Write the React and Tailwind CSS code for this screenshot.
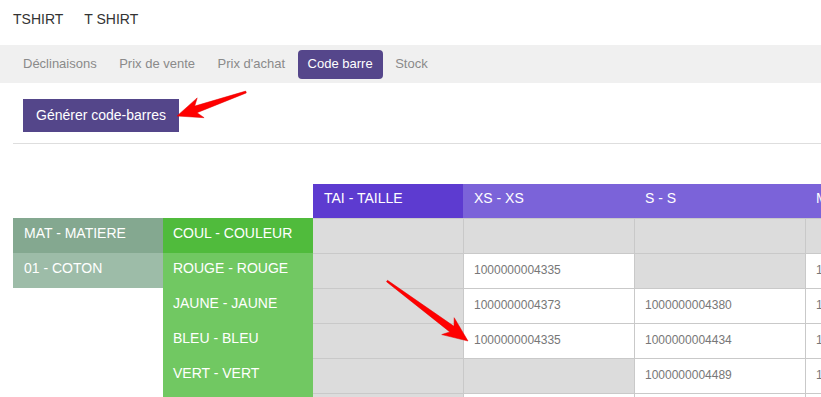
import React from 'react';

// ─── Data ─────────────────────────────────────────────────────────────────────
const TABS = ['Déclinaisons', 'Prix de vente', "Prix d'achat", 'Code barre', 'Stock'];
const SIZES = ['XS - XS', 'S - S', 'M - M'];

// null = no barcode (gray cell)
const ROWS = [
  { mat: '01 - COTON', coul: 'ROUGE - ROUGE', codes: ['1000000004335', null, '1000000004342'] },
  { mat: null, coul: 'JAUNE - JAUNE', codes: ['1000000004373', '1000000004380', '1000000004397'] },
  { mat: null, coul: 'BLEU - BLEU', codes: ['1000000004335', '1000000004434', '1000000004441'] },
  { mat: null, coul: 'VERT - VERT', codes: [null, '1000000004489', '1000000004496'] },
  { mat: null, coul: '', codes: ['', '', ''] },
];

// ─── Red annotation arrow (tapered shaft, swept barbs) ────────────────────────
function Arrow({ x1, y1, x2, y2 }) {
  const dx = x2 - x1;
  const dy = y2 - y1;
  const L = Math.hypot(dx, dy);
  const ux = dx / L, uy = dy / L;
  const vx = -uy, vy = ux;
  const pt = (u, v) => `${(x1 + ux * u + vx * v).toFixed(1)},${(y1 + uy * u + vy * v).toFixed(1)}`;
  const pts = [
    pt(0, -0.9),
    pt(L - 20, -3.5),
    pt(L - 25, -10.5),
    pt(L, 0),
    pt(L - 25, 10.5),
    pt(L - 20, 3.5),
    pt(0, 0.9),
  ].join(' ');
  return <polygon points={pts} fill="#ff0000" stroke="#e00000" strokeWidth="0.5" strokeLinejoin="round" />;
}

function Cell({ value, className = '' }) {
  const empty = value === null;
  return (
    <div
      className={`border-t border-[#c9c9c9] pl-[10px] pt-[6px] text-[12px] leading-5 text-[#777] ${
        empty ? 'bg-[#dcdcdc]' : 'bg-white'
      } ${className}`}
    >
      {value}
    </div>
  );
}

// ─── App ──────────────────────────────────────────────────────────────────────
export default function App() {
  return (
    <div
      className="relative h-screen w-full overflow-hidden bg-white text-[#333]"
      style={{ fontFamily: '"Liberation Sans", Arial, sans-serif' }}
    >
      {/* ── Title ── */}
      <div className="flex gap-[21px] pl-[13px] pt-[9px] text-[14px] leading-5">
        <span>TSHIRT</span>
        <span>T SHIRT</span>
      </div>

      {/* ── Tabs ── */}
      <nav className="mt-[16px] flex h-[38px] items-center gap-[2.5px] bg-[#f0f0f0] pl-[13px] text-[13px]">
        {TABS.map((t) => (
          <span
            key={t}
            className={`flex h-[29px] items-center rounded-[4px] px-[10px] ${
              t === 'Code barre' ? 'bg-[#55468b] text-white' : 'text-[#8a8a8a]'
            }`}
          >
            {t}
          </span>
        ))}
      </nav>

      {/* ── Action ── */}
      <div className="pl-[23px] pt-[16px]">
        <button className="h-[33px] bg-[#54468a] px-[13px] text-[14px] text-white">
          Générer code-barres
        </button>
      </div>

      <hr className="ml-[13px] mt-[11px] border-0 border-t border-[#dedede]" />

      {/* ── Barcode matrix ── */}
      <div className="ml-[13px] mt-[40px] w-[976px] text-[14px]">
        <div className="flex h-[34px] text-white">
          <div className="w-[300px]" />
          <div className="w-[150px] bg-[#5d3bd0] px-[11px] pt-[4px] leading-5">TAI - TAILLE</div>
          {SIZES.map((s) => (
            <div key={s} className="w-[171px] bg-[#7b63d9] px-[11px] pt-[4px] leading-5">
              {s}
            </div>
          ))}
        </div>

        <div className="flex h-[35px]">
          <div className="w-[150px] bg-[#84a890] px-[11px] pt-[5px] leading-5 text-white">MAT - MATIERE</div>
          <div className="w-[150px] bg-[#50bb3c] px-[10px] pt-[5px] leading-5 text-white">COUL - COULEUR</div>
          <Cell value={null} className="w-[150px]" />
          {SIZES.map((s) => (
            <Cell key={s} value={null} className="w-[171px] border-l" />
          ))}
        </div>

        {ROWS.map((r, i) => (
          <div key={i} className="flex h-[35px]">
            <div className={`w-[150px] px-[11px] pt-[5px] leading-5 text-white ${r.mat ? 'bg-[#9dbca8]' : ''}`}>
              {r.mat}
            </div>
            <div className="w-[150px] bg-[#71c862] px-[10px] pt-[5px] leading-5 text-white">{r.coul}</div>
            <Cell value={null} className="w-[150px]" />
            {r.codes.map((c, j) => (
              <Cell key={j} value={c} className="w-[171px] border-l" />
            ))}
          </div>
        ))}
      </div>

      {/* ── Annotation arrows ── */}
      <svg className="pointer-events-none absolute left-0 top-0" width="821" height="397">
        <Arrow x1={246} y1={92} x2={177} y2={116} />
        <Arrow x1={387} y1={281} x2={468} y2={341} />
      </svg>
    </div>
  );
}
